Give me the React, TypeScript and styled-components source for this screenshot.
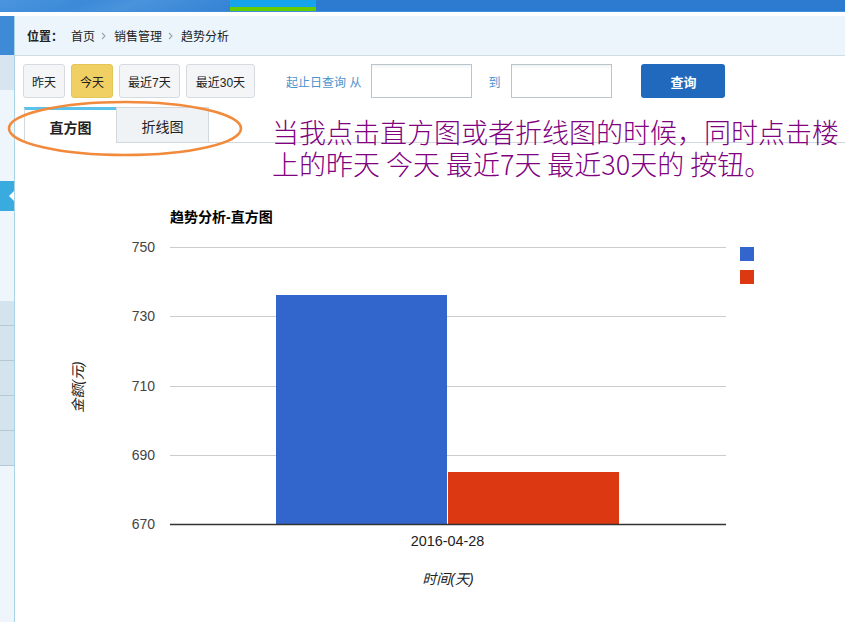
import React from "react";
import styled, { createGlobalStyle } from "styled-components";

const GlobalStyle = createGlobalStyle`
  html, body { margin: 0; padding: 0; background: #fff; }
  body {
    font-family: "Liberation Sans", "Noto Sans CJK SC", sans-serif;
    font-size: 12px;
    color: #333;
  }
  #root { width: 845px; height: 622px; overflow: hidden; }
`;

const Page = styled.div`
  display: flex;
  flex-direction: column;
  width: 845px;
  height: 622px;
  overflow: hidden;
`;

const Header = styled.div`
  display: flex;
  height: 11px;
  background: #2d7bd0;
  border-bottom: 1px solid #3f8ddb;
`;

const HeaderLeft = styled.div`
  width: 230px;
  background: linear-gradient(160deg, #4b95de 0%, #3c8ad8 35%, #4a93dc 55%, #3482d4 100%);
`;

const HeaderTab = styled.div`
  width: 86px;
  display: flex;
  flex-direction: column;
`;

const HeaderTabTop = styled.div`
  height: 7px;
  background: #15a3ea;
`;

const HeaderTabBottom = styled.div`
  height: 4px;
  background: #66cc00;
`;

const WhiteStripe = styled.div`
  height: 4px;
  background: #fff;
`;

const Body = styled.div`
  flex: 1;
  display: flex;
  min-height: 0;
`;

const Sidebar = styled.div`
  width: 14px;
  flex-shrink: 0;
  border-right: 1px solid #a8d4e6;
  background: #eef6fc;
  display: flex;
  flex-direction: column;
`;

const SideBlock = styled.div<{ $h: number; $bg?: string; $line?: boolean }>`
  height: ${(p) => p.$h}px;
  background: ${(p) => p.$bg || "transparent"};
  border-bottom: ${(p) => (p.$line ? "1px solid #b4c8d5" : "none")};
  flex-shrink: 0;
`;

const SideActive = styled.div`
  height: 30px;
  background: #3aabdf;
  position: relative;
  flex-shrink: 0;
  &::after {
    content: "";
    position: absolute;
    right: 0;
    top: 10px;
    border-style: solid;
    border-width: 5px 5px 5px 0;
    border-color: transparent #ffffff transparent transparent;
  }
`;

const Main = styled.div`
  flex: 1;
  display: flex;
  flex-direction: column;
  min-width: 0;
`;

const Breadcrumb = styled.div`
  height: 39px;
  background: #ecf5fb;
  border-bottom: 1px solid #cfdde6;
  display: flex;
  align-items: center;
  padding-left: 12px;
  font-size: 12px;
  color: #222;
`;

const CrumbLabel = styled.span`
  font-weight: bold;
  margin-right: 8px;
`;

const Chevron = styled.svg`
  width: 5px;
  height: 8px;
  margin: 0 8px 0 6px;
`;

const Toolbar = styled.div`
  display: flex;
  align-items: center;
  padding: 8px 8px 0 8px;
  height: 34px;
`;

const DayButton = styled.div<{ $active?: boolean; $pad?: number }>`
  height: 32px;
  padding: 0 ${(p) => p.$pad ?? 8}px;
  margin-right: 6px;
  display: flex;
  align-items: center;
  border: 1px solid ${(p) => (p.$active ? "#e3c65a" : "#d5dbe0")};
  border-radius: 3px;
  background: ${(p) => (p.$active ? "#f1d063" : "#f3f5f7")};
  color: #222;
  font-size: 12px;
`;

const RangeLabel = styled.span`
  margin-left: 25px;
  margin-right: 10px;
  color: #4d93cc;
  font-size: 12px;
`;

const DateInput = styled.div`
  width: 99px;
  height: 32px;
  border: 1px solid #b9c5cd;
  background: linear-gradient(#f1f3f5 0px, #ffffff 4px);
`;

const ToLabel = styled.span`
  margin: 0 11px 0 16px;
  color: #4d93cc;
  font-size: 12px;
`;

const QueryButton = styled.div`
  margin-left: 29px;
  width: 84px;
  height: 34px;
  border-radius: 3px;
  background: #2169bd;
  color: #fff;
  font-weight: bold;
  font-size: 13px;
  display: flex;
  align-items: center;
  justify-content: center;
`;

const TabRow = styled.div`
  position: relative;
  margin-top: 9px;
  padding-left: 9px;
  display: flex;
  height: 36px;
`;

const Tab = styled.div<{ $active?: boolean }>`
  width: ${(p) => (p.$active ? 92 : 93)}px;
  box-sizing: border-box;
  display: flex;
  align-items: center;
  justify-content: center;
  font-size: 14px;
  color: #222;
  font-weight: ${(p) => (p.$active ? "bold" : "normal")};
  background: ${(p) => (p.$active ? "#fff" : "#f0f3f5")};
  border-left: 1px solid #d2d9de;
  border-right: ${(p) => (p.$active ? "none" : "1px solid #d2d9de")};
  border-top: ${(p) => (p.$active ? "3px solid #5bc2ec" : "1px solid #d2d9de")};
  border-bottom: ${(p) => (p.$active ? "none" : "1px solid #d2d9de")};
  padding-top: ${(p) => (p.$active ? "0" : "1px")};
`;

const TabFill = styled.div`
  flex: 1;
  border-bottom: 1px solid #d2d9de;
`;

const Annotation = styled.div`
  position: absolute;
  left: 257px;
  top: 9px;
  display: flex;
  flex-direction: column;
`;

const AnnotationLine = styled.div`
  height: 32px;
  font-family: "Noto Sans CJK SC", sans-serif;
  font-size: 27px;
  line-height: 32px;
  color: #800080;
  white-space: nowrap;
  font-weight: 300;
  overflow: visible;
`;

const Circle = styled.svg`
  position: absolute;
  left: -15px;
  top: -11px;
  width: 250px;
  height: 70px;
  overflow: visible;
`;

const ChartSvg = styled.svg`
  display: block;
  width: 830px;
  height: 478px;
  flex-shrink: 0;
`;

const grid = [
  { v: "750", y: 248 },
  { v: "730", y: 317 },
  { v: "710", y: 387 },
  { v: "690", y: 456 },
];

const ChevronIcon = () => (
  <Chevron viewBox="0 0 5 8">
    <path d="M1 1 L4 4 L1 7" fill="none" stroke="#9aa4ab" strokeWidth="1.1" />
  </Chevron>
);

export default function App() {
  return (
    <Page>
      <GlobalStyle />
      <Header>
        <HeaderLeft />
        <HeaderTab>
          <HeaderTabTop />
          <HeaderTabBottom />
        </HeaderTab>
      </Header>
      <WhiteStripe />
      <Body>
        <Sidebar>
          <SideBlock $h={39} $bg="#3d8ad6" />
          <SideBlock $h={35} $bg="#d6e5ef" />
          <SideBlock $h={91} />
          <SideActive />
          <SideBlock $h={90} />
          <SideBlock $h={24} $bg="#d4e4ee" $line />
          <SideBlock $h={34} $bg="#d4e4ee" $line />
          <SideBlock $h={34} $bg="#d4e4ee" $line />
          <SideBlock $h={34} $bg="#d4e4ee" $line />
          <SideBlock $h={34} $bg="#d4e4ee" $line />
        </Sidebar>
        <Main>
          <Breadcrumb>
            <CrumbLabel>位置：</CrumbLabel>
            <span>首页</span>
            <ChevronIcon />
            <span>销售管理</span>
            <ChevronIcon />
            <span>趋势分析</span>
          </Breadcrumb>
          <Toolbar>
            <DayButton>昨天</DayButton>
            <DayButton $active>今天</DayButton>
            <DayButton>最近7天</DayButton>
            <DayButton $pad={9}>最近30天</DayButton>
            <RangeLabel>起止日查询 从</RangeLabel>
            <DateInput />
            <ToLabel>到</ToLabel>
            <DateInput />
            <QueryButton>查询</QueryButton>
          </Toolbar>
          <TabRow>
            <Tab $active>直方图</Tab>
            <Tab>折线图</Tab>
            <TabFill />
            <Annotation>
              <AnnotationLine>当我点击直方图或者折线图的时候，同时点击楼</AnnotationLine>
              <AnnotationLine>上的昨天 今天 最近7天 最近30天的 按钮。</AnnotationLine>
            </Annotation>
            <Circle viewBox="0 0 250 70">
              <ellipse cx="125" cy="32.5" rx="116" ry="26.5" fill="none" stroke="#f28a3c" strokeWidth="2.6" />
            </Circle>
          </TabRow>
          <ChartSvg viewBox="15 144 830 478">
            <text x="170" y="223" fontFamily="Liberation Sans, Noto Sans CJK SC, sans-serif" fontSize="14" fontWeight="bold" fill="#000">
              趋势分析-直方图
            </text>
            {grid.map((g) => (
              <g key={g.v}>
                <line x1="170" x2="726" y1={g.y + 0.5} y2={g.y + 0.5} stroke="#cccccc" strokeWidth="1" />
                <text x="155" y={g.y + 5} textAnchor="end" fontFamily="Liberation Sans, sans-serif" fontSize="14" fill="#444">
                  {g.v}
                </text>
              </g>
            ))}
            <text x="155" y="530" textAnchor="end" fontFamily="Liberation Sans, sans-serif" fontSize="14" fill="#444">
              670
            </text>
            <rect x="276" y="296" width="171" height="229" fill="#3366cc" />
            <rect x="448" y="473" width="171" height="52" fill="#dc3912" />
            <line x1="170" x2="726" y1="525.5" y2="525.5" stroke="#333333" strokeWidth="1.5" />
            <text x="447.5" y="547" textAnchor="middle" fontFamily="Liberation Sans, sans-serif" fontSize="14.4" fill="#222">
              2016-04-28
            </text>
            <text x="448" y="585" textAnchor="middle" fontFamily="Liberation Sans, Noto Sans CJK SC, sans-serif" fontSize="14" fontStyle="italic" fill="#222">
              时间(天)
            </text>
            <text
              x="0"
              y="0"
              transform="translate(83 388) rotate(-90)"
              textAnchor="middle"
              fontFamily="Liberation Sans, Noto Sans CJK SC, sans-serif"
              fontSize="14"
              fontStyle="italic"
              fill="#222"
            >
              金额(元)
            </text>
            <rect x="740" y="248" width="14" height="14" fill="#3366cc" />
            <rect x="740" y="271" width="14" height="14" fill="#dc3912" />
          </ChartSvg>
        </Main>
      </Body>
    </Page>
  );
}
